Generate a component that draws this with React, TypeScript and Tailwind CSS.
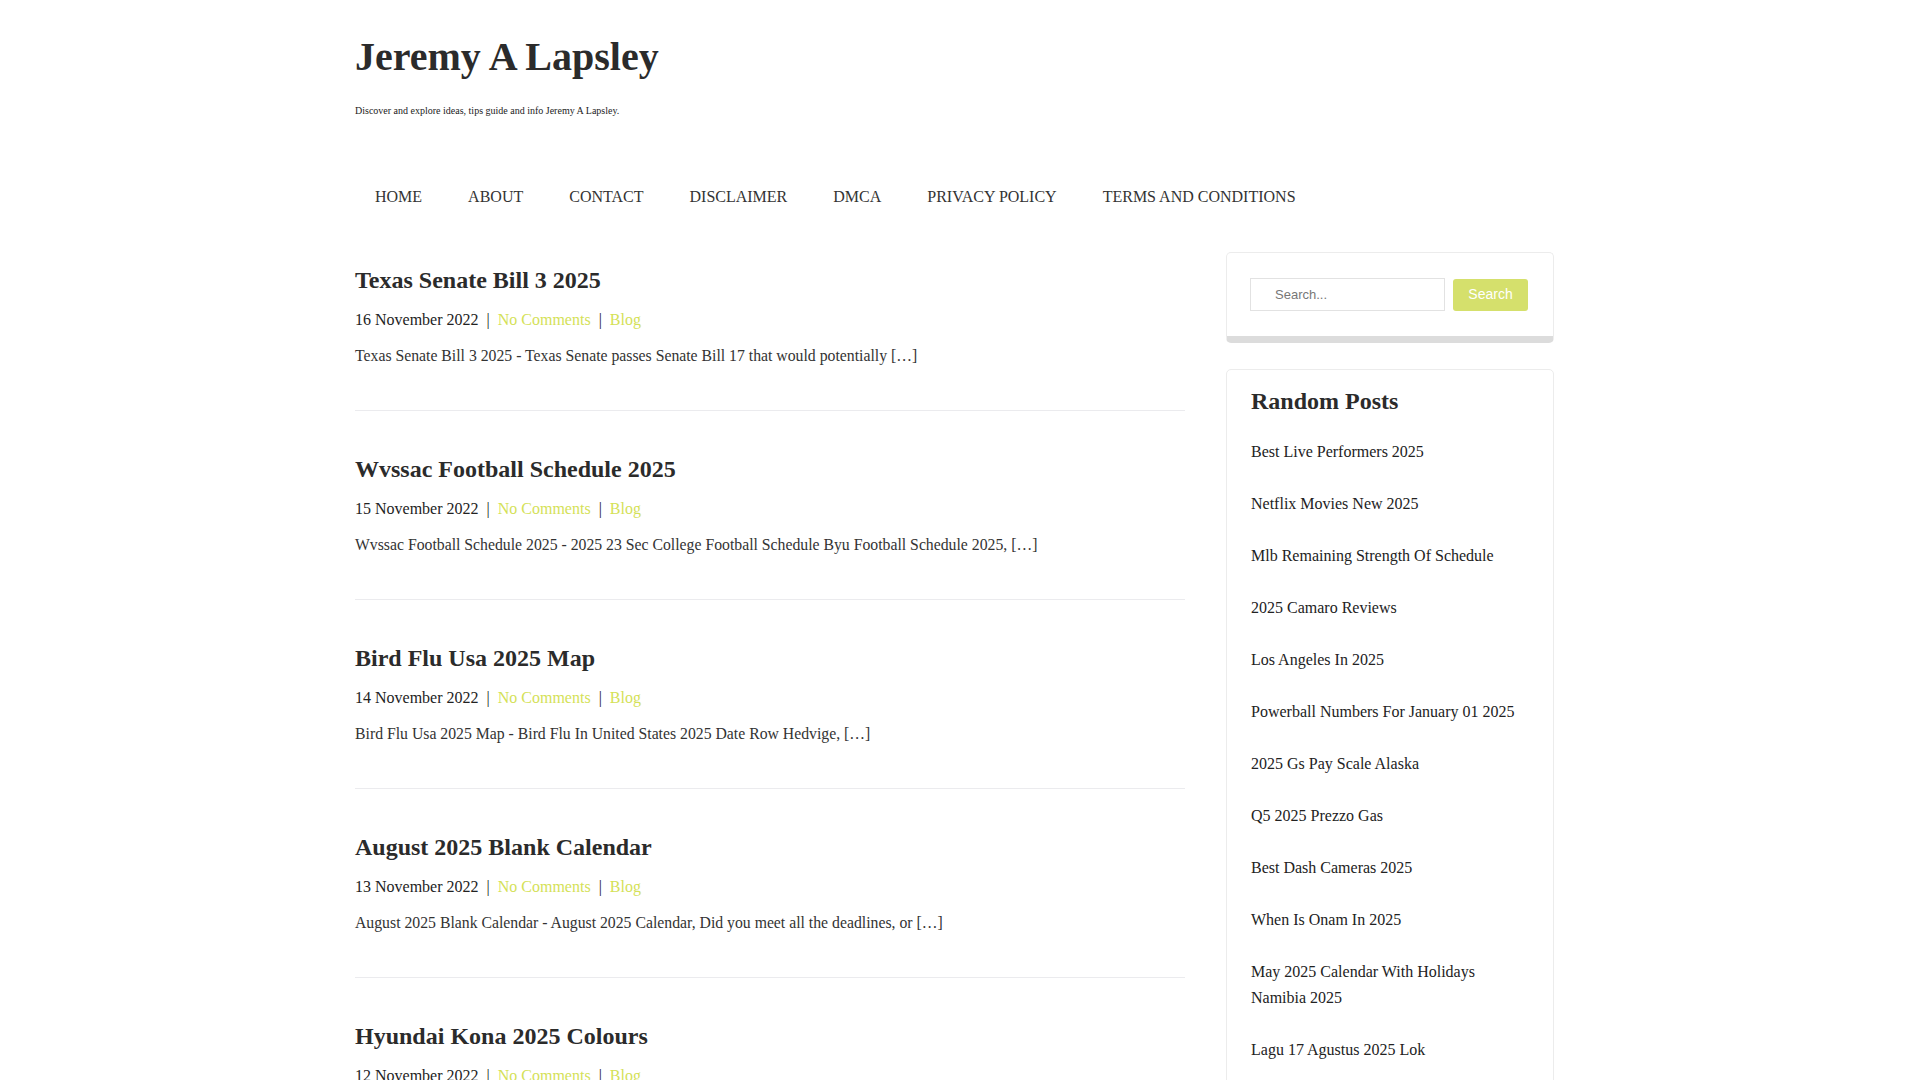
import React from 'react'

const posts = [
    {
        title: 'Texas Senate Bill 3 2025',
        date: '16 November 2022',
        excerpt: 'Texas Senate Bill 3 2025 - Texas Senate passes Senate Bill 17 that would potentially […]',
    },
    {
        title: 'Wvssac Football Schedule 2025',
        date: '15 November 2022',
        excerpt: 'Wvssac Football Schedule 2025 - 2025 23 Sec College Football Schedule Byu Football Schedule 2025, […]',
    },
    {
        title: 'Bird Flu Usa 2025 Map',
        date: '14 November 2022',
        excerpt: 'Bird Flu Usa 2025 Map - Bird Flu In United States 2025 Date Row Hedvige, […]',
    },
    {
        title: 'August 2025 Blank Calendar',
        date: '13 November 2022',
        excerpt: 'August 2025 Blank Calendar - August 2025 Calendar, Did you meet all the deadlines, or […]',
    },
    {
        title: 'Hyundai Kona 2025 Colours',
        date: '12 November 2022',
        excerpt: 'Hyundai Kona 2025 Colours - 2025 Hyundai Kona Colours, Price, Specs and Release Date […]',
    },
    {
        title: 'Nfl Draft Order 2025',
        date: '11 November 2022',
        excerpt: 'Nfl Draft Order 2025 - 2025 Nfl Draft Order Round 1 Projections, […]',
    },
]

const randomPosts = [
    'Best Live Performers 2025',
    'Netflix Movies New 2025',
    'Mlb Remaining Strength Of Schedule',
    '2025 Camaro Reviews',
    'Los Angeles In 2025',
    'Powerball Numbers For January 01 2025',
    '2025 Gs Pay Scale Alaska',
    'Q5 2025 Prezzo Gas',
    'Best Dash Cameras 2025',
    'When Is Onam In 2025',
    'May 2025 Calendar With Holidays Namibia 2025',
    'Lagu 17 Agustus 2025 Lok',
    'Ford Ranger Raptor 2025 Colors',
    '2025 Honda Pilot Trailsport',
]

const menu = ['HOME', 'ABOUT', 'CONTACT', 'DISCLAIMER', 'DMCA', 'PRIVACY POLICY', 'TERMS AND CONDITIONS']

const PostItem = ({ post }: { post: typeof posts[number] }) => (
    <article className="border-b border-[#ebebee] pb-[42px] mb-[44px]">
        <h2 className="text-[24px] leading-[29px] font-bold text-[#2b2b2b]">
            <a href="#">{post.title}</a>
        </h2>
        <div className="mt-[13px] text-[16px] leading-6 text-[#222]">
            {post.date}
            <span className="mx-2">|</span>
            <a href="#" className="text-[#d4e157]">No Comments</a>
            <span className="mx-2">|</span>
            <a href="#" className="text-[#d4e157]">Blog</a>
        </div>
        <p className="mt-[12px] text-[15.75px] leading-6 text-[#333]">{post.excerpt}</p>
    </article>
)

export default function App() {
    return (
        <div className="min-h-screen bg-white pr-[10px] font-['Liberation_Serif',serif] text-[#333]">
            <div className="mx-auto w-[1200px]">
                <header className="pt-[33px]">
                    <h1 className="text-[40px] leading-[48px] font-bold text-[#2b2b2b]">
                        <a href="#">Jeremy A Lapsley</a>
                    </h1>
                    <p className="mt-[22px] text-[10px] leading-[15px] text-[#222]">
                        Discover and explore ideas, tips guide and info Jeremy A Lapsley.
                    </p>
                </header>

                <nav className="mt-[52px] flex py-[15px]">
                    {menu.map((m) => (
                        <a key={m} href="#" className="px-[23px] first:pl-[20px] text-[16px] leading-6 text-[#333]">
                            {m}
                        </a>
                    ))}
                </nav>

                <div className="mt-[42px] flex gap-[41px] items-start">
                    <main className="w-[830px]">
                        {posts.map((p) => (
                            <PostItem key={p.title} post={p} />
                        ))}
                    </main>

                    <aside className="w-[328px] -mt-[14px]">
                        <div className="rounded-[5px] border border-[#ececec] border-b-[7px] border-b-[#dcdcdc] px-[23px] pt-[25px] pb-[25px]">
                            <form className="flex items-center gap-[8px]" onSubmit={(e) => e.preventDefault()}>
                                <input
                                    type="text"
                                    placeholder="Search..."
                                    className="w-[195px] h-[33px] border border-[#e2e2e2] pl-[24px] text-[13px] font-['Liberation_Sans',sans-serif] text-[#555] placeholder:text-[#777] outline-none"
                                />
                                <button
                                    type="submit"
                                    className="w-[75px] h-[32px] rounded-[3px] bg-[#d5e06c] text-white text-[14px] font-['Liberation_Sans',sans-serif]"
                                >
                                    Search
                                </button>
                            </form>
                        </div>

                        <div className="mt-[26px] rounded-[5px] border border-[#ececec] px-[24px] pt-[17px] pb-[20px]">
                            <h3 className="text-[24px] leading-[29px] font-bold text-[#2b2b2b] mb-[10px]">Random Posts</h3>
                            <ul>
                                {randomPosts.map((r) => (
                                    <li key={r} className="py-[13px] text-[16px] leading-[26px] text-[#222]">
                                        <a href="#">{r}</a>
                                    </li>
                                ))}
                            </ul>
                        </div>
                    </aside>
                </div>
            </div>
        </div>
    )
}
